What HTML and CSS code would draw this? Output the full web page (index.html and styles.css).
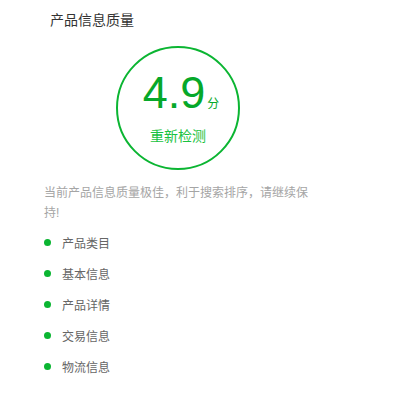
FILE: index.html
```html
<!DOCTYPE html>
<html>
<head>
<meta charset="utf-8">
<link rel="stylesheet" href="styles.css">
</head>
<body>
<div class="panel">
  <div class="title">产品信息质量</div>
  <div class="score-wrap">
    <div class="score-circle">
      <div class="score"><span class="num">4.9</span><span class="unit">分</span></div>
      <div class="recheck">重新检测</div>
    </div>
  </div>
  <p class="desc">当前产品信息质量极佳，利于搜索排序，请继续保持!</p>
  <ul class="items">
    <li><span class="dot"></span>产品类目</li>
    <li><span class="dot"></span>基本信息</li>
    <li><span class="dot"></span>产品详情</li>
    <li><span class="dot"></span>交易信息</li>
    <li><span class="dot"></span>物流信息</li>
  </ul>
</div>
</body>
</html>
```
FILE: styles.css
```css
html, body {
  margin: 0;
  padding: 0;
  background: #fff;
}
body {
  font-family: "Liberation Sans", "Noto Sans CJK SC", sans-serif;
}
.panel {
  width: 268px;
  padding: 10px 0 0 44px;
}
.title {
  padding-left: 6px;
  font-size: 14px;
  line-height: 20px;
  color: #333;
}
.score-wrap {
  display: flex;
  justify-content: center;
  margin-top: 16px;
}
.score-circle {
  width: 120px;
  height: 120px;
  border: 2px solid #0bb532;
  border-radius: 50%;
  display: flex;
  flex-direction: column;
  align-items: center;
}
.score {
  margin-top: 19px;
  display: flex;
  align-items: baseline;
  color: #06a82a;
  margin-left: 6px;
}
.num {
  font-size: 45px;
  line-height: 52px;
}
.unit {
  font-size: 12px;
  margin-left: 2px;
}
.recheck {
  margin-top: 8px;
  font-size: 14px;
  line-height: 18px;
  color: #19c240;
}
.desc {
  margin: 13px 0 0 0;
  font-size: 12px;
  line-height: 20px;
  color: #a5a5a5;
}
.items {
  list-style: none;
  margin: 4px 0 0 0;
  padding: 0;
}
.items li {
  display: flex;
  align-items: center;
  height: 31px;
  font-size: 12px;
  color: #666;
}
.dot {
  width: 7px;
  height: 7px;
  border-radius: 50%;
  background: #0bb532;
  margin-right: 11px;
}
```
